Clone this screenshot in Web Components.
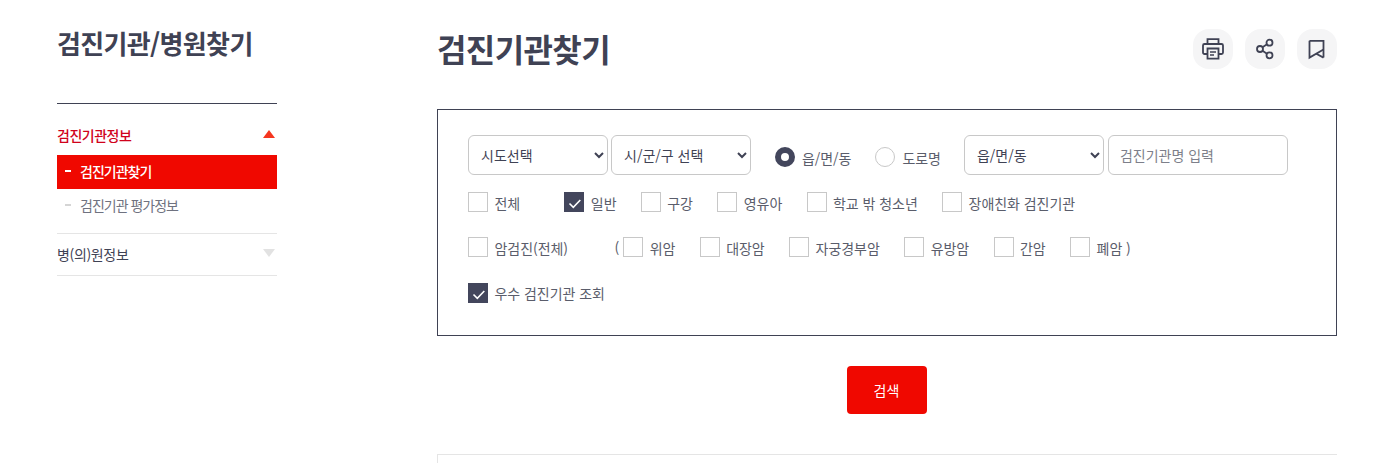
<!DOCTYPE html>
<html lang="ko">
<head>
<meta charset="utf-8">
<title>검진기관찾기</title>
<style>
  html, body { margin: 0; background: #fff; }
  body {
    font-family: "Noto Sans CJK KR", "Noto Sans", sans-serif;
    color: #3f4254;
    height: 463px;
  }
</style>
</head>
<body>
<hs-page>
  <hs-side slot="side"></hs-side>
  <hs-head title-text="검진기관찾기"></hs-head>
  <hs-search></hs-search>
</hs-page>

<script>
class HsPage extends HTMLElement {
  constructor() {
    super();
    this.attachShadow( {mode: 'open'} ).innerHTML = `
      <style>
        :host { display: flex; box-sizing: border-box; padding: 0 60px 0 57px; }
        .side { flex: 0 0 220px; margin-right: 160px; }
        main { flex: 0 0 900px; }
      </style>
      <div class="side"><slot name="side"></slot></div>
      <main><slot></slot></main>
    `;
  }
}

class HsSide extends HTMLElement {
  constructor() {
    super();
    this.attachShadow( {mode: 'open'} ).innerHTML = `
      <style>
        :host { display: block; }
        h2 { margin: 0; padding-top: 24px; box-sizing: border-box; border-bottom: 1px solid #3f4254; height: 104px;
             font-size: 26px; line-height: 38px; font-weight: 700; letter-spacing: -0.65px; }
        .top { display: flex; justify-content: space-between; align-items: center; font-size: 14px; letter-spacing: -0.5px; line-height: 20px; }
        .open { padding: 21px 0 10px; color: #d0021b; font-weight: 500; }
        .arrow { width: 0; height: 0; border: 6px solid transparent; margin-right: 2px; }
        .up { border-top: 0; border-bottom: 8px solid #f5361f; margin-top: -3px; }
        .down { border-bottom: 0; border-top: 8px solid #e2e2e2; margin-top: -2px; }
        ul { list-style: none; margin: 0; padding: 0 0 10px; border-bottom: 1px solid #e5e5e5; }
        li { box-sizing: border-box; display: flex; align-items: center; height: 34px; padding: 0 0 2px 8px; font-size: 14px; letter-spacing: -1px; color: #6f7280; }
        li::before { content: ""; width: 6px; height: 2px; background: #d5d5d5; margin-right: 9px; }
        li.on { background: #f00800; color: #fff; font-weight: 500; }
        li.on::before { background: #fff; }
        .closed { padding: 10px 0 11px; border-bottom: 1px solid #e5e5e5; letter-spacing: -0.35px; }
      </style>
      <h2>검진기관/병원찾기</h2>
      <div class="top open"><span>검진기관정보</span><i class="arrow up"></i></div>
      <ul>
        <li class="on">검진기관찾기</li>
        <li>검진기관 평가정보</li>
      </ul>
      <div class="top closed"><span>병(의)원정보</span><i class="arrow down"></i></div>
    `;
  }
}

class HsIconButton extends HTMLElement {
  constructor() {
    super();
    this.attachShadow( {mode: 'open'} ).innerHTML = `
      <style>
        :host { display: flex; align-items: center; justify-content: center; width: 40px; height: 40px; border-radius: 16px; background: #f5f5f6; }
      </style>
      <slot></slot>
    `;
  }
}

class HsHead extends HTMLElement {
  constructor() {
    super();
    this.attachShadow( {mode: 'open'} ).innerHTML = `
      <style>
        :host { display: flex; justify-content: space-between; align-items: flex-start; height: 109px; }
        h1 { margin: 0; padding-top: 25px; font-size: 32px; line-height: 46px; font-weight: 700; letter-spacing: -0.6px; }
        div { display: flex; gap: 12px; padding-top: 29px; }
        svg { display: block; fill: none; stroke: #3f4254; stroke-width: 1.8; }
      </style>
      <h1></h1>
      <div>
        <hs-icon-button>
          <svg width="24" height="24" viewBox="0 0 24 24">
            <path d="M6.500 7V2.200h11V7"/>
            <path d="M6.500 17H3.500A1.500 1.500 0 0 1 2 15.500v-7A1.500 1.500 0 0 1 3.500 7h17A1.500 1.500 0 0 1 22 8.500v7a1.500 1.500 0 0 1-1.500 1.500h-3"/>
            <path d="M6.500 11.500h11v10.200h-11z"/>
            <path d="M9 15h6M9 18h4" stroke-width="1.400"/>
          </svg>
        </hs-icon-button>
        <hs-icon-button>
          <svg width="24" height="24" viewBox="0 0 24 24">
            <circle cx="16.500" cy="5.700" r="3"/>
            <circle cx="7" cy="12" r="3"/>
            <circle cx="16.500" cy="18.300" r="3"/>
            <path d="M9.500 10.300l4.500-3M9.500 13.700l4.500 3"/>
          </svg>
        </hs-icon-button>
        <hs-icon-button>
          <svg width="24" height="24" viewBox="0 0 24 24">
            <path d="M4.500 3.800h14v16.800"/>
            <path d="M4.500 3.800v16.800L18.500 12.500"/>
            <path d="M11.300 16.700l7.200 3.900"/>
          </svg>
        </hs-icon-button>
      </div>
    `;
    this.shadowRoot.querySelector( 'h1' ).textContent = this.getAttribute( 'title-text' );
  }
}

class HsCheck extends HTMLElement {
  constructor() {
    super();
    this.attachShadow( {mode: 'open'} ).innerHTML = `
      <style>
        :host { display: inline-flex; align-items: center; height: 20px; font-size: 14px; letter-spacing: -0.05px; color: #5a5d6b; white-space: nowrap; }
        i { box-sizing: border-box; display: block; width: 20px; height: 20px; border: 1px solid #c8c8c8; margin-right: 6.500px; }
        :host( [checked] ) i { background: #43465c; border-color: #43465c; }
        svg { display: none; }
        :host( [checked] ) svg { display: block; margin: 1px; }
        span { position: relative; top: var( --label-top, 1px ); }
      </style>
      <i><svg width="18" height="18" viewBox="0 0 18 18" fill="none" stroke="#fff" stroke-width="1.6"><path d="M3.500 9.500l3.800 3.800 7-7.300"/></svg></i>
      <span><slot></slot></span>
    `;
  }
}

class HsRadio extends HTMLElement {
  constructor() {
    super();
    this.attachShadow( {mode: 'open'} ).innerHTML = `
      <style>
        :host { display: inline-flex; align-items: center; margin-top: 4px; font-size: 14px; letter-spacing: -0.05px; color: #5a5d6b; white-space: nowrap; }
        i { box-sizing: border-box; display: block; width: 20px; height: 20px; border-radius: 50%; border: 1px solid #c8c8c8; margin-right: 7px; }
        :host( [checked] ) i { border: 6px solid #43465c; background: #fff; }
        span { position: relative; top: 1px; }
      </style>
      <i></i>
      <span><slot></slot></span>
    `;
  }
}

class HsSearch extends HTMLElement {
  constructor() {
    super();
    this.attachShadow( {mode: 'open'} ).innerHTML = `
      <style>
        :host { display: block; }
        form { box-sizing: border-box; height: 227px; margin: 0; padding: 25px 30px 0; border: 1px solid #3f4254; }
        .row { display: flex; align-items: center; }
        .fields { height: 40px; gap: 3px; }
        select, input { box-sizing: border-box; height: 40px; border: 1px solid #c8c8c8; border-radius: 6px; background: #fff;
                        font: 14px "Noto Sans CJK KR", "Noto Sans", sans-serif; color: #3f4254; outline: 0; }
        select { width: 140px; padding: 0 0 1px 8px; }
        input { width: 180px; margin-left: 1px; padding: 0 11px 1px; }
        input::placeholder { color: #7d7f8a; opacity: 1; }
        .gap-dong-radio { margin-left: 21px; }
        .gap-road { margin-left: 21px; }
        .gap-dong { margin-left: 20px; }
        .checks { margin-top: 17px; gap: 24.300px; }
        .cancer { margin-top: 25px; gap: 24.400px; }
        .best { margin-top: 26px; --label-top: 0px; }
        .all { width: 72px; }
        .total { width: 102px; margin-right: 20px; }
        .paren { display: flex; align-items: center; gap: 4px; font-size: 14px; color: #5a5d6b; }
        .actions { display: flex; justify-content: center; padding-top: 30px; }
        button { width: 80px; height: 48px; border: 0; border-radius: 4px; background: #f00800; color: #fff;
                 font: 14px "Noto Sans CJK KR", "Noto Sans", sans-serif; padding: 0 1px 0 0; }
        .result { height: 9px; margin-top: 40px; box-sizing: border-box; border: 1px solid #e5e5e5; border-bottom: 0; border-right: 0; }
      </style>
      <form>
        <div class="row fields">
          <select><option>시도선택</option></select>
          <select><option>시/군/구 선택</option></select>
          <hs-radio class="gap-dong-radio" checked>읍/면/동</hs-radio>
          <hs-radio class="gap-road">도로명</hs-radio>
          <select class="gap-dong"><option>읍/면/동</option></select>
          <input placeholder="검진기관명 입력">
        </div>
        <div class="row checks">
          <hs-check class="all">전체</hs-check>
          <hs-check checked>일반</hs-check>
          <hs-check>구강</hs-check>
          <hs-check>영유아</hs-check>
          <hs-check>학교 밖 청소년</hs-check>
          <hs-check>장애친화 검진기관</hs-check>
        </div>
        <div class="row cancer">
          <hs-check class="total">암검진(전체)</hs-check>
          <span class="paren">(<hs-check>위암</hs-check></span>
          <hs-check>대장암</hs-check>
          <hs-check>자궁경부암</hs-check>
          <hs-check>유방암</hs-check>
          <hs-check>간암</hs-check>
          <hs-check>폐암 )</hs-check>
        </div>
        <div class="row best">
          <hs-check checked>우수 검진기관 조회</hs-check>
        </div>
      </form>
      <div class="actions"><button type="button">검색</button></div>
      <div class="result"></div>
    `;
  }
}

window.customElements.define( 'hs-icon-button', HsIconButton );
window.customElements.define( 'hs-check', HsCheck );
window.customElements.define( 'hs-radio', HsRadio );
window.customElements.define( 'hs-head', HsHead );
window.customElements.define( 'hs-side', HsSide );
window.customElements.define( 'hs-search', HsSearch );
window.customElements.define( 'hs-page', HsPage );
</script>
</body>
</html>
